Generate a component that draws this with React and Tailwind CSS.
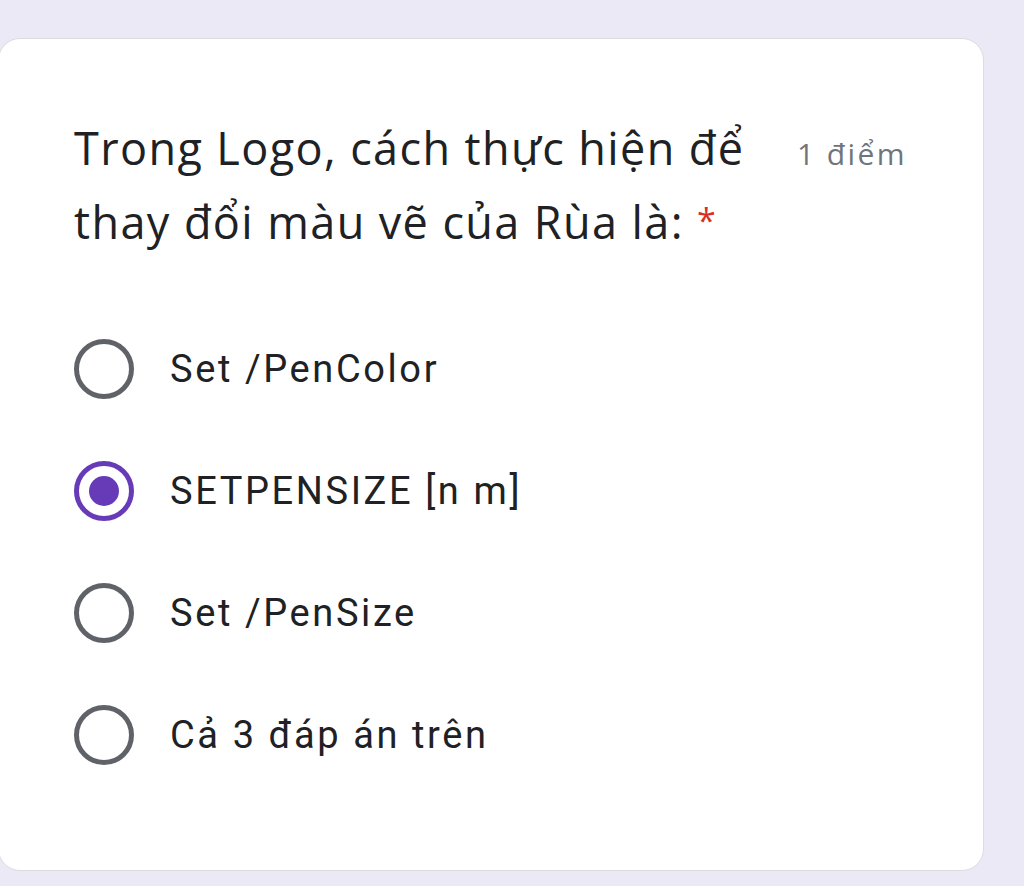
import React, { useState } from 'react';

const options = ['Set /PenColor', 'SETPENSIZE [n m]', 'Set /PenSize', 'Cả 3 đáp án trên'];

const Radio = ({ checked }) => (
  <span
    className={`flex h-[60px] w-[60px] shrink-0 items-center justify-center rounded-full border-[5px] ${
      checked ? 'border-[#673ab7]' : 'border-[#5f6368]'
    }`}
  >
    {checked && <span className="h-[30px] w-[30px] rounded-full bg-[#673ab7]" />}
  </span>
);

const App = () => {
  const [selected, setSelected] = useState(1);

  return (
    <div className="h-[886px] w-[1024px] overflow-hidden bg-[#ece9f7] pt-[38px] font-['Roboto',sans-serif]">
      <div className="ml-[-2px] h-[833px] w-[986px] rounded-[22px] border border-[#dadce0] bg-white pl-[75px] pr-[76px] pt-[72px]">
        <div className="flex items-baseline justify-between">
          <h2 className="w-[700px] font-['Open_Sans',sans-serif] text-[45px] leading-[74px] tracking-[1.4px] text-[#202124]">
            Trong Logo, cách thực hiện để
            <br />
            thay đổi màu vẽ của Rùa là:{' '}
            <span className="relative top-[-6px] text-[34px] text-[#d93025]">*</span>
          </h2>
          <span className="font-['Open_Sans',sans-serif] text-[30px] tracking-[2.4px] text-[#70757a]">1 điểm</span>
        </div>
        <div className="mt-[76px] flex flex-col gap-[62px]">
          {options.map((opt, i) => (
            <label
              key={opt}
              className="flex cursor-pointer items-center gap-[36px]"
              onClick={() => setSelected(i)}
            >
              <Radio checked={selected === i} />
              <span className="text-[38px] leading-[60px] tracking-[2.6px] text-[#202124]">{opt}</span>
            </label>
          ))}
        </div>
      </div>
    </div>
  );
};

export default App;
